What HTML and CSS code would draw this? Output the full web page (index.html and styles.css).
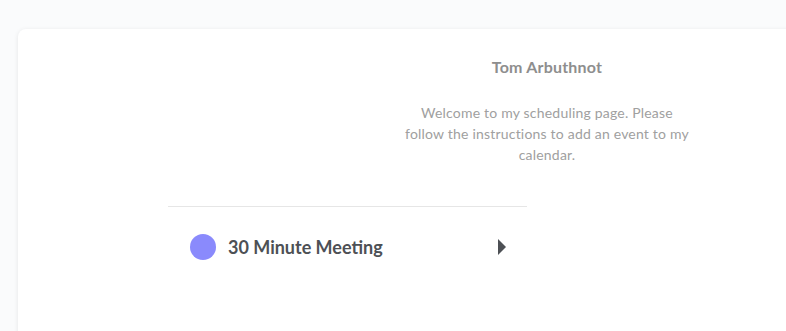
FILE: index.html
```html
<!DOCTYPE html>
<html lang="en">
<head>
<meta charset="utf-8">
<title>Tom Arbuthnot</title>
<link rel="stylesheet" href="styles.css">
</head>
<body>
<main class="card">
  <header class="profile">
    <h1 class="profile-name">Tom Arbuthnot</h1>
    <p class="profile-desc">Welcome to my scheduling page. Please follow the instructions to add an event to my calendar.</p>
  </header>
  <section class="events">
    <div class="event-col">
      <a class="event" href="#">
        <span class="event-dot"></span>
        <span class="event-name">30 Minute Meeting</span>
        <span class="event-arrow"></span>
      </a>
    </div>
  </section>
</main>
</body>
</html>
```
FILE: styles.css
```css
html, body {
  margin: 0;
  padding: 0;
  background: #fafbfc;
  font-family: Lato, "Open Sans", Arial, sans-serif;
  overflow: hidden;
}
.card {
  margin: 29px 0 0 18px;
  width: 1058px;
  min-height: 400px;
  background: #fff;
  border-radius: 8px;
  box-shadow: 0 1px 5px rgba(0, 0, 0, 0.09);
}
.profile {
  padding-top: 28px;
  text-align: center;
}
.profile-name {
  margin: 0;
  font-size: 16px;
  line-height: 20px;
  font-weight: 700;
  letter-spacing: 0.2px;
  color: #8e8e8e;
}
.profile-desc {
  margin: 25px auto 0;
  width: 290px;
  font-size: 14px;
  line-height: 21px;
  letter-spacing: 0.2px;
  color: #a0a0a0;
}
.events {
  margin-top: 41px;
  padding-left: 150px;
}
.event-col {
  width: 359px;
  border-top: 1px solid #e6e6e6;
}
.event {
  display: flex;
  align-items: center;
  height: 80px;
  padding: 0 21px 0 22px;
  text-decoration: none;
}
.event-dot {
  width: 26px;
  height: 26px;
  border-radius: 50%;
  background: #8a8afc;
  flex: none;
}
.event-name {
  margin-left: 12px;
  flex: 1;
  font-size: 18px;
  font-weight: 700;
  color: #4d5055;
}
.event-arrow {
  width: 0;
  height: 0;
  border-top: 8px solid transparent;
  border-bottom: 8px solid transparent;
  border-left: 8px solid #4d5055;
}
```
